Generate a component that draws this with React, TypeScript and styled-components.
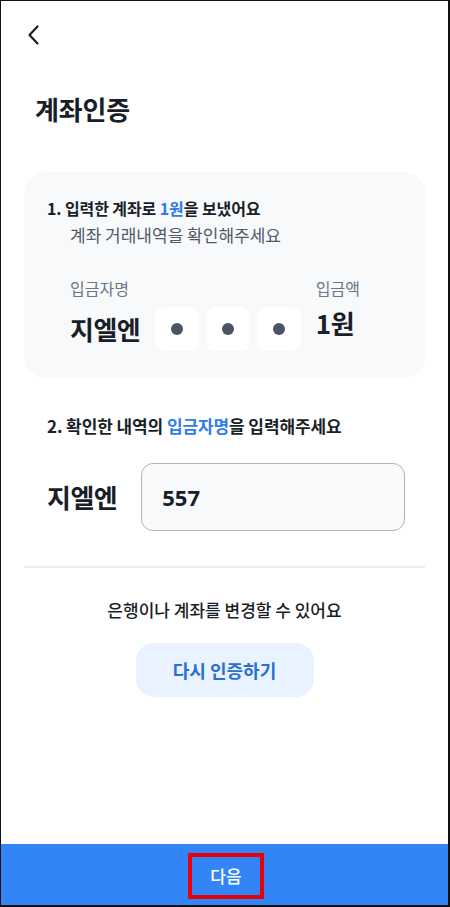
import React from "react";
import styled, { createGlobalStyle } from "styled-components";

const Global = createGlobalStyle`
  html, body {
    margin: 0;
    padding: 0;
    background: #ffffff;
  }
  body {
    font-family: "Noto Sans CJK KR", "Noto Sans", sans-serif;
    color: #191f28;
  }
  * { box-sizing: border-box; }
`;

const Frame = styled.div`
  width: 450px;
  height: 907px;
  display: flex;
  flex-direction: column;
  border-style: solid;
  border-color: #111;
  border-width: 1px 2px 2px 1px;
  background: #fff;
  overflow: hidden;
`;

const TopBar = styled.div`
  height: 68px;
  display: flex;
  align-items: center;
  padding-left: 21px;
`;

const BackButton = styled.button`
  width: 24px;
  height: 24px;
  padding: 0;
  border: none;
  background: none;
  display: flex;
  align-items: center;
  justify-content: center;
  color: #191f28;
`;

const Title = styled.h1`
  margin: 23px 0 0;
  padding-left: 34px;
  font-size: 26px;
  font-weight: 700;
  line-height: 34px;
  letter-spacing: -0.2px;
`;

const Card = styled.section`
  margin: 46px 22px 0 23px;
  background: #f8f9fa;
  border-radius: 22px;
  padding: 24px 22px 27px 23px;
`;

const StepTitle = styled.h2<{ $size: number }>`
  margin: 0;
  font-size: ${(p) => p.$size}px;
  font-weight: 700;
  line-height: 24px;
  letter-spacing: -0.1px;
  color: #191f28;
  white-space: nowrap;
`;

const Accent = styled.span`
  color: #2f7de8;
`;

const StepHint = styled.p`
  margin: 3px 0 0 23px;
  font-size: 17px;
  font-weight: 400;
  line-height: 24px;
  color: #4e5968;
`;

const DepositGrid = styled.div`
  margin: 30px 0 0 23px;
  display: grid;
  grid-template-columns: 1fr auto;
  column-gap: 12px;
`;

const FieldLabel = styled.span`
  font-size: 16px;
  line-height: 22px;
  color: #6b7684;
`;

const DepositRow = styled.div`
  margin-top: 8px;
  display: flex;
  align-items: center;
  gap: 7px;
`;

const BigName = styled.span<{ $size: number }>`
  flex-shrink: 0;
  white-space: nowrap;
  font-size: ${(p) => p.$size}px;
  font-weight: 700;
  line-height: 1.2;
  color: #191f28;
  letter-spacing: -0.5px;
`;

const DigitSlots = styled.div`
  display: flex;
  gap: 7px;
  margin-left: 8px;
`;

const Slot = styled.div`
  width: 44px;
  height: 44px;
  border-radius: 9px;
  background: #ffffff;
  display: flex;
  align-items: center;
  justify-content: center;
`;

const Dot = styled.span`
  width: 12px;
  height: 12px;
  border-radius: 50%;
  background: #4a5467;
`;

const AmountCol = styled.div`
  display: flex;
  flex-direction: column;
  padding-right: 44px;
`;

const NameCol = styled.div`
  display: flex;
  flex-direction: column;
`;

const Section = styled.section`
  margin-top: 36px;
  padding: 0 24px 0 46px;
`;

const InputRow = styled.div`
  margin-top: 25px;
  display: flex;
  align-items: center;
  gap: 24px;
`;

const CodeInput = styled.div`
  flex-shrink: 0;
  width: 264px;
  height: 68px;
  border: 1px solid #aeb4bb;
  border-radius: 12px;
  background: #f9fafb;
  display: flex;
  align-items: center;
  padding-left: 20px;
  font-size: 22px;
  font-weight: 700;
  color: #191f28;
  font-family: "Noto Sans", "Noto Sans CJK KR", sans-serif;
`;

const Divider = styled.hr`
  margin: 35px 23px 0;
  border: none;
  height: 2px;
  background: #eceef0;
`;

const Notice = styled.p`
  margin: 30px 0 0;
  text-align: center;
  font-size: 17px;
  font-weight: 500;
  line-height: 24px;
  color: #191f28;
`;

const RetryButton = styled.button`
  align-self: center;
  margin-top: 21px;
  width: 178px;
  height: 54px;
  border: none;
  border-radius: 18px;
  background: #e8f3ff;
  color: #2b6fd0;
  font-family: inherit;
  font-size: 18px;
  font-weight: 700;
`;

const Spacer = styled.div`
  flex: 1;
`;

const BottomBar = styled.div`
  height: 61px;
  background: #3384f4;
  display: flex;
  align-items: center;
  justify-content: center;
`;

const NextButton = styled.button`
  width: 76px;
  height: 46px;
  border: 4px solid #e8000b;
  background: transparent;
  color: #ffffff;
  font-family: inherit;
  font-size: 17px;
  font-weight: 500;
  display: flex;
  align-items: center;
  justify-content: center;
  padding: 0;
  margin: 2px 0 0 3px;
`;

export default function App() {
  return (
    <>
      <Global />
      <Frame>
        <TopBar>
          <BackButton aria-label="뒤로">
            <svg width="24" height="24" viewBox="0 0 24 24" fill="none">
              <path
                d="M15.5 3.5 L7.5 12 L15.5 20.5"
                stroke="currentColor"
                strokeWidth="2.2"
                strokeLinecap="round"
                strokeLinejoin="round"
              />
            </svg>
          </BackButton>
        </TopBar>
        <Title>계좌인증</Title>

        <Card>
          <StepTitle $size={16}>
            1. 입력한 계좌로 <Accent>1원</Accent>을 보냈어요
          </StepTitle>
          <StepHint>계좌 거래내역을 확인해주세요</StepHint>
          <DepositGrid>
            <NameCol>
              <FieldLabel>입금자명</FieldLabel>
              <DepositRow>
                <BigName $size={26}>지엘엔</BigName>
                <DigitSlots>
                  {[0, 1, 2].map((i) => (
                    <Slot key={i}>
                      <Dot />
                    </Slot>
                  ))}
                </DigitSlots>
              </DepositRow>
            </NameCol>
            <AmountCol>
              <FieldLabel>입금액</FieldLabel>
              <DepositRow>
                <BigName $size={26}>1원</BigName>
              </DepositRow>
            </AmountCol>
          </DepositGrid>
        </Card>

        <Section>
          <StepTitle $size={17}>
            2. 확인한 내역의 <Accent>입금자명</Accent>을 입력해주세요
          </StepTitle>
          <InputRow>
            <BigName $size={26}>지엘엔</BigName>
            <CodeInput>557</CodeInput>
          </InputRow>
        </Section>

        <Divider />
        <Notice>은행이나 계좌를 변경할 수 있어요</Notice>
        <RetryButton>다시 인증하기</RetryButton>

        <Spacer />
        <BottomBar>
          <NextButton>다음</NextButton>
        </BottomBar>
      </Frame>
    </>
  );
}
